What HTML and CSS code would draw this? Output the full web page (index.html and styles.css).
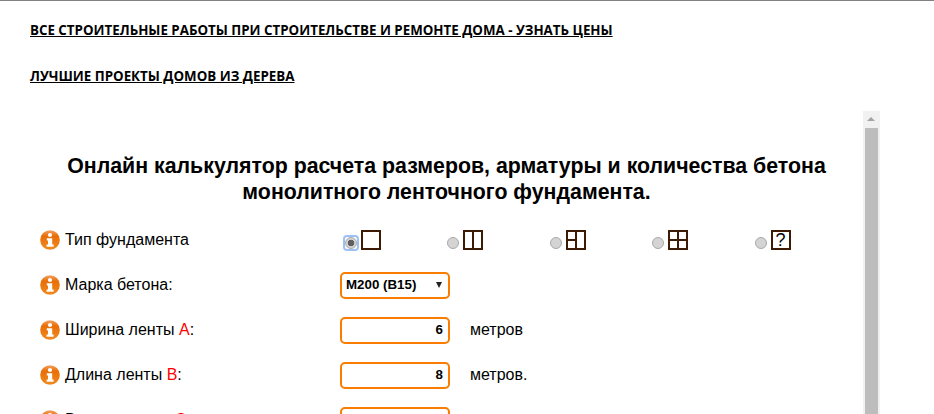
FILE: index.html
```html
<!DOCTYPE html>
<html lang="ru">
<head>
    <meta charset="UTF-8">
    <meta name="viewport" content="width=device-width, initial-scale=1.0">
    <title>Калькулятор ленточного фундамента</title>
    <link rel="stylesheet" href="styles.css">
</head>
<body>
    <div class="top-links">
        <a href="#" class="top-link">Все строительные работы при строительстве и ремонте дома - узнать цены</a>
        <a href="#" class="top-link">Лучшие проекты домов из дерева</a>
    </div>

    <div class="calc-frame">
        <div class="calc">
            <h1 class="calc-title">Онлайн калькулятор расчета размеров, арматуры и количества бетона монолитного ленточного фундамента.</h1>

            <div class="calc-row">
                <div class="calc-label">
                    <svg class="info" viewBox="0 0 20 20"><use href="#info-icon"/></svg>
                    <span>Тип фундамента</span>
                </div>
                <div class="type-list">
                    <div class="type-item">
                        <span class="radio radio-on"></span>
                        <svg class="plan" viewBox="0 0 20 20"><rect x="1" y="1" width="18" height="18"/></svg>
                    </div>
                    <div class="type-item">
                        <span class="radio"></span>
                        <svg class="plan" viewBox="0 0 20 20"><rect x="1" y="1" width="18" height="18"/><path d="M10 1V19"/></svg>
                    </div>
                    <div class="type-item">
                        <span class="radio"></span>
                        <svg class="plan" viewBox="0 0 20 20"><rect x="1" y="1" width="18" height="18"/><path d="M10 1V19M1 10H10"/></svg>
                    </div>
                    <div class="type-item">
                        <span class="radio"></span>
                        <svg class="plan" viewBox="0 0 20 20"><rect x="1" y="1" width="18" height="18"/><path d="M10 1V19M1 10H19"/></svg>
                    </div>
                    <div class="type-item">
                        <span class="radio"></span>
                        <span class="plan-unknown">?</span>
                    </div>
                </div>
            </div>

            <div class="calc-row">
                <div class="calc-label">
                    <svg class="info" viewBox="0 0 20 20"><use href="#info-icon"/></svg>
                    <span>Марка бетона:</span>
                </div>
                <div class="select-box">
                    <span>М200 (В15)</span>
                    <span class="select-arrow"></span>
                </div>
            </div>

            <div class="calc-row">
                <div class="calc-label">
                    <svg class="info" viewBox="0 0 20 20"><use href="#info-icon"/></svg>
                    <span>Ширина ленты <span class="mark">А</span>:</span>
                </div>
                <input class="num-input" type="text" value="6">
                <span class="unit">метров</span>
            </div>

            <div class="calc-row">
                <div class="calc-label">
                    <svg class="info" viewBox="0 0 20 20"><use href="#info-icon"/></svg>
                    <span>Длина ленты <span class="mark">В</span>:</span>
                </div>
                <input class="num-input" type="text" value="8">
                <span class="unit">метров.</span>
            </div>

            <div class="calc-row">
                <div class="calc-label">
                    <svg class="info" viewBox="0 0 20 20"><use href="#info-icon"/></svg>
                    <span>Высота ленты <span class="mark">С</span>:</span>
                </div>
                <input class="num-input" type="text" value="1">
                <span class="unit">метров.</span>
            </div>
        </div>

        <div class="scrollbar">
            <div class="scroll-up"></div>
            <div class="scroll-thumb"></div>
        </div>
    </div>

    <!-- общий значок -->
    <svg class="icon-defs" width="0" height="0">
        <defs>
            <linearGradient id="info-fill" x1="0" y1="0" x2="0" y2="1">
                <stop offset="0" stop-color="#f4a263"/>
                <stop offset="0.3" stop-color="#e86e08"/>
                <stop offset="1" stop-color="#f28a1e"/>
            </linearGradient>
            <g id="info-icon">
                <circle cx="10" cy="10" r="9.8" fill="url(#info-fill)"/>
                <circle cx="10" cy="5" r="2.1" fill="#fff"/>
                <path d="M6.8 8.2H12.2V14.6H13.6V16.8H6.6V14.6H8V10.4H6.8Z" fill="#fff"/>
            </g>
        </defs>
    </svg>
</body>
</html>
```

FILE: styles.css
```css
html, body {
    height: 100%;
    overflow: hidden;
}
body {
    margin: 0;
    background: #fff;
    border-top: 1px solid #808080;
    box-sizing: border-box;
    font-family: "Liberation Sans", Arial, sans-serif;
    color: #000;
}
.top-links {
    display: flex;
    flex-direction: column;
    align-items: flex-start;
    gap: 30px;
    padding: 21px 0 0 30px;
}
.top-link {
    font-family: "Open Sans", sans-serif;
    font-size: 13.33px;
    line-height: 16px;
    font-weight: 700;
    text-transform: uppercase;
    color: #000;
    text-decoration: underline;
}
.calc-frame {
    display: flex;
    width: 880px;
    margin-top: 27px;
}
.calc {
    flex: 1;
    min-width: 0;
    padding: 42px 0 0 40px;
}
.calc-title {
    margin: 0 0 22px;
    padding-right: 10px;
    font-size: 21.33px;
    line-height: 26px;
    font-weight: 700;
    text-align: center;
}
.calc-row {
    display: flex;
    align-items: center;
    height: 28px;
    margin-bottom: 17px;
}
.calc-label {
    display: flex;
    align-items: center;
    gap: 5px;
    width: 300px;
    margin-top: -2px;
    flex-shrink: 0;
    font-size: 16px;
}
.info {
    width: 20px;
    height: 20px;
}
.icon-defs {
    position: absolute;
}
.mark {
    color: #f00;
}
.type-list {
    display: flex;
    margin: -2px 0 0 -0.4px;
}
.type-item {
    display: flex;
    align-items: flex-end;
    width: 102.5px;
    padding-left: 5px;
    margin-right: -5px;
}
.radio {
    position: relative;
    width: 12px;
    height: 12px;
    margin: 0 4px 1px 0;
    border-radius: 50%;
    background: #d4d4d4;
    border: 1px solid #a9a9a9;
    box-sizing: border-box;
    flex-shrink: 0;
}
.radio-on {
    background: radial-gradient(circle, #5f5f5f 0 3px, #d4d4d4 3.6px);
}
/* рамка фокуса вокруг выбранной кнопки */
.radio-on::before {
    content: "";
    position: absolute;
    inset: -3px;
    border: 2px solid #9dc1f7;
    border-radius: 4px;
}
.plan {
    width: 20px;
    height: 20px;
    fill: none;
    stroke: #3c1a03;
    stroke-width: 2;
}
.plan-unknown {
    width: 20px;
    height: 20px;
    box-sizing: border-box;
    border: 2px solid #3c1a03;
    font-size: 18px;
    line-height: 16px;
    text-align: center;
}
.select-box {
    display: flex;
    align-items: center;
    justify-content: space-between;
    align-self: flex-start;
    width: 110px;
    height: 27px;
    padding: 0 6px 2px 4px;
    box-sizing: border-box;
    border: 2px solid #fa7c00;
    border-radius: 5px;
    font-size: 13.33px;
    font-weight: 700;
}
.select-arrow {
    width: 0;
    height: 0;
    border-left: 3px solid transparent;
    border-right: 3px solid transparent;
    border-top: 6px solid #222;
}
.num-input {
    align-self: flex-start;
    width: 110px;
    height: 27px;
    padding: 0 5px 3px;
    box-sizing: border-box;
    border: 2px solid #fa7c00;
    border-radius: 5px;
    outline: none;
    font-family: inherit;
    font-size: 13.33px;
    font-weight: 700;
    text-align: right;
    color: #000;
}
.unit {
    margin: -2px 0 0 20px;
    font-size: 16px;
}
.scrollbar {
    width: 17px;
    height: 320px;
    flex-shrink: 0;
    background: #f1f1f1;
}
.scroll-up {
    position: relative;
    height: 17px;
}
.scroll-up::after {
    content: "";
    position: absolute;
    left: 4px;
    top: 6px;
    border-left: 4px solid transparent;
    border-right: 4px solid transparent;
    border-bottom: 4px solid #a3a3a3;
}
.scroll-thumb {
    height: 300px;
    margin: 0 2px;
    background: #bdbdbd;
}
```
